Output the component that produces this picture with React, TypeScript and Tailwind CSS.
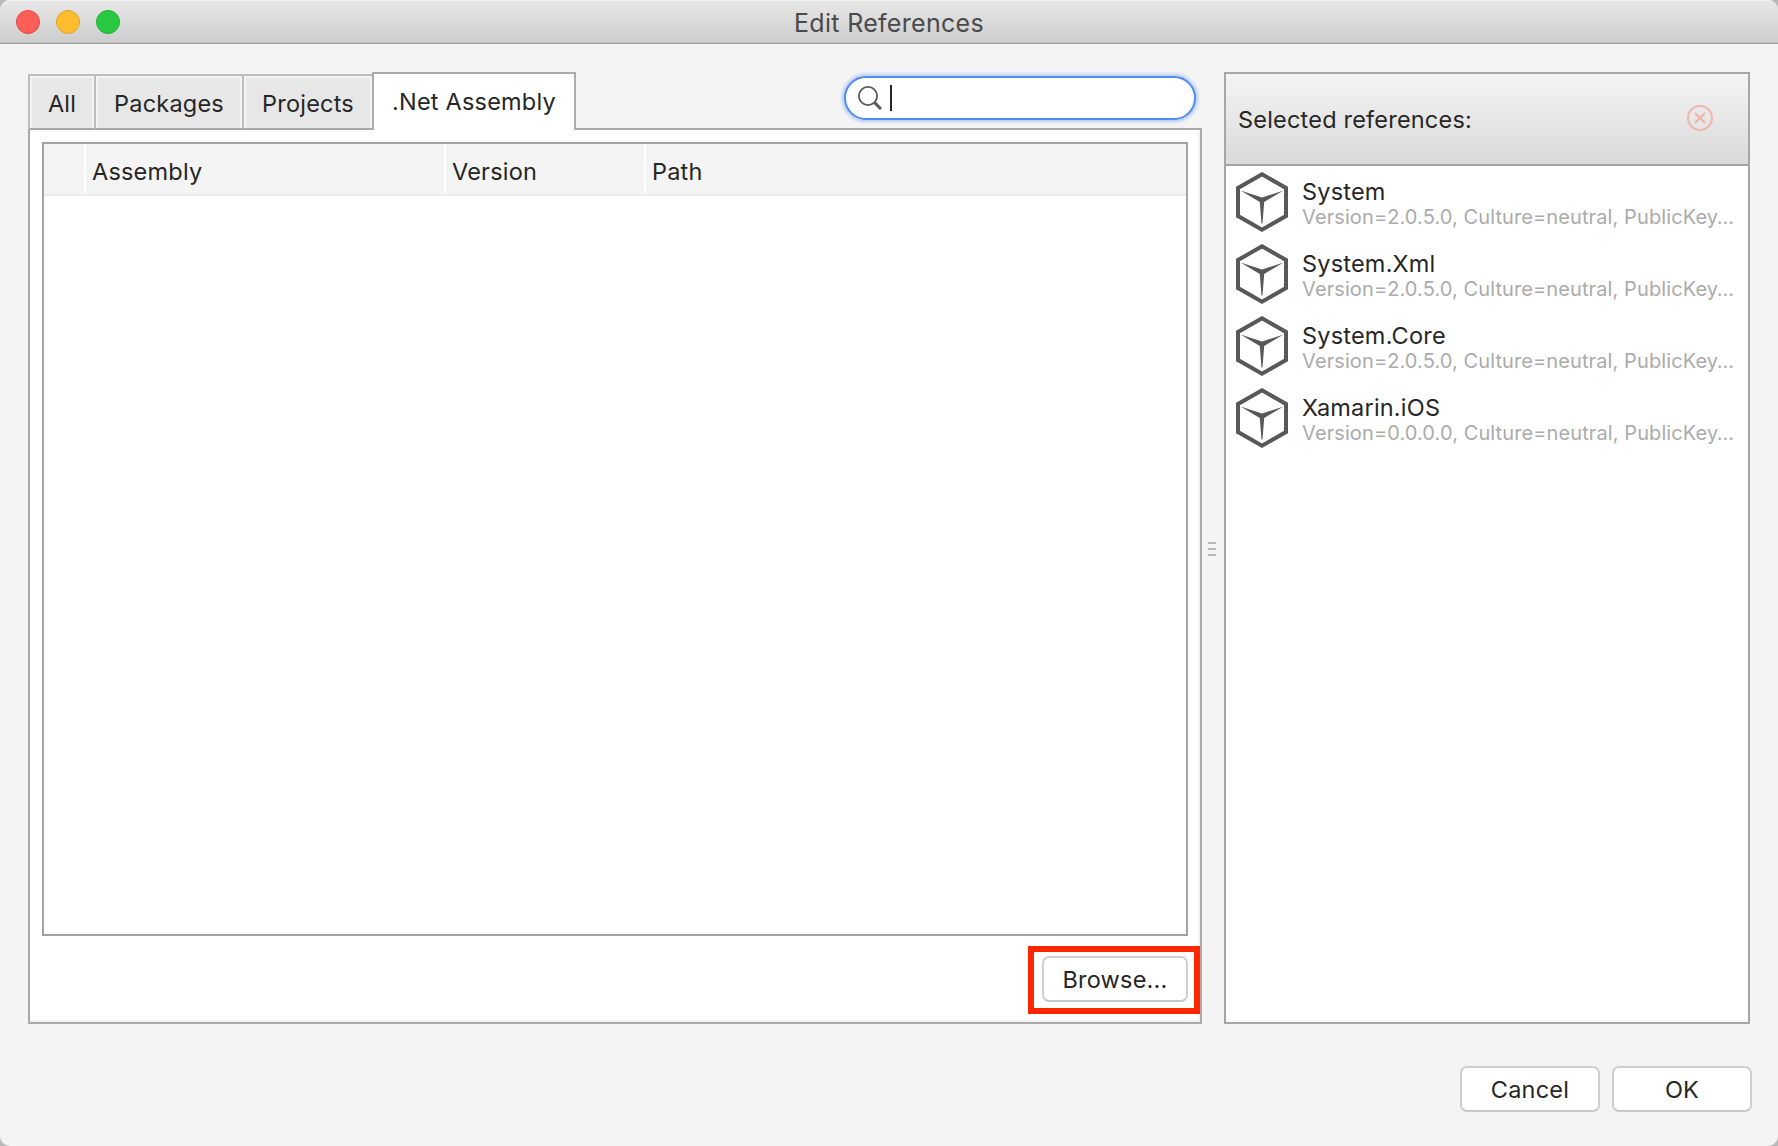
import { useState } from 'react';
import clsx from 'clsx';

const tabs = [
    { label: 'All', width: 'w-[66px]' },
    { label: 'Packages', width: 'w-[148px]' },
    { label: 'Projects', width: 'w-[130px]' },
    { label: '.Net Assembly', width: 'w-[204px]' },
];

const references = [
    { name: 'System', version: '2.0.5.0' },
    { name: 'System.Xml', version: '2.0.5.0' },
    { name: 'System.Core', version: '2.0.5.0' },
    { name: 'Xamarin.iOS', version: '0.0.0.0' },
];

function TitleBar() {
    return (
        <header className="grid h-11 shrink-0 grid-cols-[1fr_auto_1fr] items-start border-b border-[#a3a3a3] bg-linear-to-b from-[#e8e8e8] to-[#cdcdcd] shadow-[inset_0_1px_0_#f3f3f3,inset_0_-1px_0_#bebebe]">
            <div className="flex gap-4 pt-2.5 pl-4">
                <span className="size-6 rounded-full border border-[#e2463f] bg-[#ff5f57]" />
                <span className="size-6 rounded-full border border-[#dfa023] bg-[#ffbd2e]" />
                <span className="size-6 rounded-full border border-[#1dad2b] bg-[#28c940]" />
            </div>
            <h1 className="pt-[3px] text-[25px] leading-10 font-normal tracking-[0.3px] text-[#4a4a4a]">
                Edit References
            </h1>
        </header>
    );
}

function SearchField() {
    return (
        <label className="mt-1 mr-1.5 ml-auto flex h-11 w-[352px] items-center rounded-full border-2 border-[#4f8bf0] bg-white pl-3 shadow-[0_0_0_2px_#c5d6f3,0_0_0_4px_#e2e9f5]">
            <svg className="size-6" viewBox="0 0 24 24" fill="none" stroke="#5a5a5a">
                <circle cx="10" cy="10" r="9.1" strokeWidth="1.8" />
                <path d="M16.6 16.6 L23 23" strokeWidth="3" />
            </svg>
            <span className="ml-2 h-[26px] w-0.5 bg-[#262626]" />
        </label>
    );
}

function AssemblyTable() {
    return (
        <div className="mx-3 mt-3 h-[794px] border-2 border-[#a3a3a3] bg-white">
            <div className="flex h-[52px] border-b-2 border-[#ebebeb] bg-[#f4f4f4] leading-[56px]">
                <div className="w-[42px] border-r-2 border-white" />
                <div className="w-[360px] border-r-2 border-white pl-[6px]">Assembly</div>
                <div className="w-[200px] border-r-2 border-white pl-[6px]">Version</div>
                <div className="pl-[6px]">Path</div>
            </div>
        </div>
    );
}

function PushButton({ label, className }: { label: string; className: string }) {
    return (
        <button
            className={clsx(
                'h-[46px] rounded-[7px] border-2 border-[#cfcfcf] border-b-[#c6c6c6] bg-white leading-[44px] text-[#262626]',
                className
            )}
        >
            {label}
        </button>
    );
}

function CubeIcon() {
    return (
        <svg className="h-[60px] w-[52px] shrink-0" viewBox="0 0 52 60">
            <path d="M26 2.3 L50 16 V44 L26 57.7 L2 44 V16 Z" fill="none" stroke="#585858" strokeWidth="4" />
            <path d="M4.5 18.5 L26 25.5 L47.5 18.5 L28.2 30 L26.5 51.5 H25.5 L23.8 30 Z" fill="#585858" />
        </svg>
    );
}

function SelectedReferences() {
    return (
        <aside className="flex h-[952px] w-[526px] flex-col border-2 border-[#a6a6a6] bg-white">
            <div className="flex h-[92px] items-center justify-between border-b-2 border-[#a3a3a3] bg-linear-to-b from-[#f4f4f4] to-[#dadada] pr-[35px] pl-3">
                <span className="pt-0.5">Selected references:</span>
                <svg className="-mt-0.5 size-[26px]" viewBox="0 0 26 26" fill="none" stroke="#f0b4ab" strokeWidth="2">
                    <circle cx="13" cy="13" r="12" />
                    <path d="M8 8 L18 18 M18 8 L8 18" strokeWidth="2.2" />
                </svg>
            </div>
            <ul className="pt-1.5">
                {references.map((ref) => (
                    <li key={ref.name} className="flex h-[72px] pl-2.5">
                        <CubeIcon />
                        <div className="ml-[14px] pt-[6px]">
                            <p className="leading-7">{ref.name}</p>
                            <p className="text-[20px] leading-[22px] tracking-[0.1px] whitespace-nowrap text-[#ababab]">
                                Version={ref.version}, Culture=neutral, PublicKey…
                            </p>
                        </div>
                    </li>
                ))}
            </ul>
        </aside>
    );
}

export default function App() {
    const [activeTab, setActiveTab] = useState('.Net Assembly');

    return (
        <div className="h-[1146px] w-[1778px] bg-[#b9b9b9] font-['Inter','Liberation_Sans',sans-serif] text-[23.5px] tracking-[0.2px] text-[#262626]">
            <div className="flex h-full flex-col overflow-hidden rounded-[10px] bg-[#f4f4f4]">
                <TitleBar />

                <main className="flex pt-7 pl-7">
                    <section className="w-[1174px]">
                        <div className="relative -mb-0.5 flex h-[58px]">
                            {tabs.map((tab) => (
                                <button
                                    key={tab.label}
                                    onClick={() => setActiveTab(tab.label)}
                                    className={clsx(
                                        'border-t-2 border-l-2 text-center whitespace-nowrap',
                                        tab.width,
                                        activeTab === tab.label
                                            ? 'border-r-2 border-[#ababab] bg-white leading-[56px]'
                                            : 'mt-0.5 border-b-2 border-[#bcbcbc] border-b-[#a8a8a8] bg-[#e7e7e7] pt-0.5 leading-[52px] shadow-[inset_2px_2px_0_#f4f4f4,inset_-2px_0_0_#f4f4f4]'
                                    )}
                                >
                                    {tab.label}
                                </button>
                            ))}
                            <SearchField />
                        </div>

                        <div className="h-[896px] border-2 border-[#ababab] bg-white shadow-[inset_-2px_-2px_0_#f3f3f3]">
                            <AssemblyTable />
                            <div className="mt-2.5 flex justify-end">
                                <div className="h-[68px] border-6 border-[#ff2600] bg-white pt-1 pr-1.5 pl-2">
                                    <PushButton label="Browse..." className="w-[146px]" />
                                </div>
                            </div>
                        </div>
                    </section>

                    {/* Splitter grip */}
                    <div className="flex w-[22px] flex-col gap-1 pt-[470px] pl-1.5">
                        <span className="h-0.5 w-2 bg-[#b8b8b8]" />
                        <span className="h-0.5 w-2 bg-[#b8b8b8]" />
                        <span className="h-0.5 w-2 bg-[#b8b8b8]" />
                    </div>

                    <SelectedReferences />
                </main>

                <footer className="flex justify-end gap-3 pt-[42px] pr-[26px]">
                    <PushButton label="Cancel" className="w-[140px]" />
                    <PushButton label="OK" className="w-[140px]" />
                </footer>
            </div>
        </div>
    );
}
